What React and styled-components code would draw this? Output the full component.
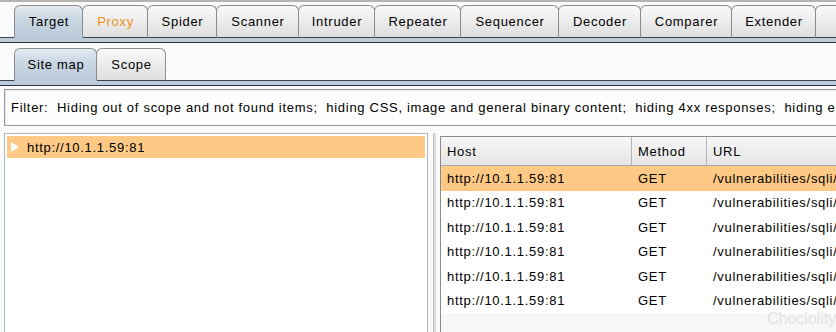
import React from 'react'
import styled, { createGlobalStyle } from 'styled-components'

const GlobalStyle = createGlobalStyle`
    *{ box-sizing: border-box; }
    html, body{
        margin: 0;
        padding: 0;
        width: 836px;
        height: 332px;
        overflow: hidden;
        background: #fbfbfb;
        font-family: "Liberation Sans", Arial, sans-serif;
        font-size: 13px;
        letter-spacing: 0.7px;
        color: #000;
    }
`

const mainTabs = [
    { label: 'Target', w: 69, active: true },
    { label: 'Proxy', w: 66, color: '#f0901c' },
    { label: 'Spider', w: 70 },
    { label: 'Scanner', w: 83 },
    { label: 'Intruder', w: 77 },
    { label: 'Repeater', w: 87 },
    { label: 'Sequencer', w: 99 },
    { label: 'Decoder', w: 83 },
    { label: 'Comparer', w: 92 },
    { label: 'Extender', w: 85 },
    { label: 'Project options', w: 150 },
]

const subTabs = [
    { label: 'Site map', w: 83, active: true },
    { label: 'Scope', w: 70 },
]

const rows = Array.from({ length: 6 }, (_, i) => ({
    host: 'http://10.1.1.59:81',
    method: 'GET',
    url: '/vulnerabilities/sqli/',
    selected: i === 0,
}))

function App() {
    return (
        <Page>
            <GlobalStyle />
            <TopLine />
            <TabRow>
                {mainTabs.map(t => (
                    <Tab key={t.label} $w={t.w} $active={t.active} $color={t.color}>{t.label}</Tab>
                ))}
            </TabRow>
            <Band />
            <Panel>
                <TabRow $sub>
                    {subTabs.map(t => (
                        <Tab key={t.label} $w={t.w} $active={t.active}>{t.label}</Tab>
                    ))}
                </TabRow>
                <Band />
                <FilterBar>
                    Filter:&nbsp; Hiding out of scope and not found items;&nbsp; hiding CSS, image and general binary content;&nbsp; hiding 4xx responses;&nbsp; hiding empty folders
                </FilterBar>
                <Split>
                    <TreePane>
                        <TreeRow>
                            <Arrow />
                            http://10.1.1.59:81
                        </TreeRow>
                    </TreePane>
                    <Divider />
                    <TablePane>
                        <HeaderRow>
                            <HeadCell $w={191}>Host</HeadCell>
                            <HeadCell $w={75}>Method</HeadCell>
                            <HeadCell $w={200}>URL</HeadCell>
                        </HeaderRow>
                        {rows.map((r, i) => (
                            <Row key={i} $selected={r.selected}>
                                <Cell $w={191}>{r.host}</Cell>
                                <Cell $w={75}>{r.method}</Cell>
                                <Cell $w={200}>{r.url}</Cell>
                            </Row>
                        ))}
                        <Watermark>Chociolity</Watermark>
                    </TablePane>
                </Split>
            </Panel>
        </Page>
    )
}

const Page = styled.div`
    width: 836px;
    height: 332px;
    display: flex;
    flex-direction: column;
    overflow: hidden;
`

const TopLine = styled.div`
    height: 2px;
    background: #b4b4b4;
    flex: none;
`

const TabRow = styled.div`
    display: flex;
    align-items: flex-end;
    padding-left: 14px;
    padding-top: ${p => p.$sub ? '5px' : '3px'};
    border-bottom: 1px solid #3c4650;
    background: #fbfbfb;
    flex: none;
    white-space: nowrap;
`

const Tab = styled.div`
    flex: none;
    width: ${p => p.$w}px;
    height: 33px;
    margin-right: -1px;
    margin-bottom: -1px;
    display: flex;
    align-items: center;
    justify-content: center;
    padding-left: 1px;
    border: 1px solid #8c8c8c;
    border-bottom: ${p => p.$active ? '1px solid #bccbd9' : '1px solid #3c4650'};
    border-radius: 6px 6px 0 0;
    color: ${p => p.$color || '#000'};
    background: ${p => p.$active
        ? 'linear-gradient(#e4ebf2, #c9d6e2 45%, #bccbd9)'
        : 'linear-gradient(#f8f8f8, #ececec 50%, #dedede)'};
    position: relative;
    z-index: ${p => p.$active ? 2 : 1};
`

const Band = styled.div`
    height: 5px;
    flex: none;
    background: #bccbd9;
    border-bottom: 1px solid #2e3740;
`

const Panel = styled.div`
    flex: 1;
    display: flex;
    flex-direction: column;
    min-height: 0;
    background: #fbfbfb;
`

const FilterBar = styled.div`
    margin: 3px 0 0 4px;
    height: 37px;
    flex: none;
    display: flex;
    align-items: center;
    padding-left: 6px;
    white-space: nowrap;
    overflow: hidden;
    background: #fefefe;
    border: 1px solid #9a9a9a;
    border-right: none;
    box-shadow: inset 1px 1px 0 #e6e6e6;
`

const Split = styled.div`
    flex: 1;
    min-height: 0;
    display: flex;
    margin-top: 7px;
    padding-left: 4px;
`

const TreePane = styled.div`
    width: 424px;
    flex: none;
    padding: 2px;
    background: #fff;
    border: 1px solid #a8b8c8;
    border-bottom: none;
`

const TreeRow = styled.div`
    height: 22px;
    display: flex;
    align-items: center;
    gap: 8px;
    padding-left: 4px;
    background: #fdc985;
`

const Arrow = styled.span`
    width: 0;
    height: 0;
    border-top: 5px solid transparent;
    border-bottom: 5px solid transparent;
    border-left: 8px solid #fff;
`

const Divider = styled.div`
    width: 12px;
    flex: none;
    display: flex;
    justify-content: center;
    &::before{
        content: '';
        width: 2px;
        background: #dcdcdc;
        border-left: 1px solid #c4c4c4;
    }
`

const TablePane = styled.div`
    flex: 1;
    min-width: 0;
    margin-top: 3px;
    position: relative;
    background: #f7f7f7;
    border: 1px solid #8c8c8c;
    border-right: none;
    border-bottom: none;
    overflow: hidden;
`

const HeaderRow = styled.div`
    display: flex;
    height: 29px;
    background: linear-gradient(#f6f6f6, #e6e6e6);
    border-bottom: 1px solid #a8a8a8;
`

const HeadCell = styled.div`
    flex: none;
    width: ${p => p.$w}px;
    display: flex;
    align-items: center;
    padding-left: 6px;
    border-right: 1px solid #b4b4b4;
    white-space: nowrap;
`

const Row = styled.div`
    display: flex;
    height: 24.5px;
    background: ${p => p.$selected ? '#fdc985' : '#fff'};
`

const Cell = styled.div`
    flex: none;
    width: ${p => p.$w}px;
    display: flex;
    align-items: center;
    padding-left: 6px;
    white-space: nowrap;
    overflow: hidden;
`

const Watermark = styled.div`
    position: absolute;
    left: 326px;
    top: 173px;
    font-size: 16px;
    letter-spacing: 0;
    color: #e2e2e2;
`

export default App
